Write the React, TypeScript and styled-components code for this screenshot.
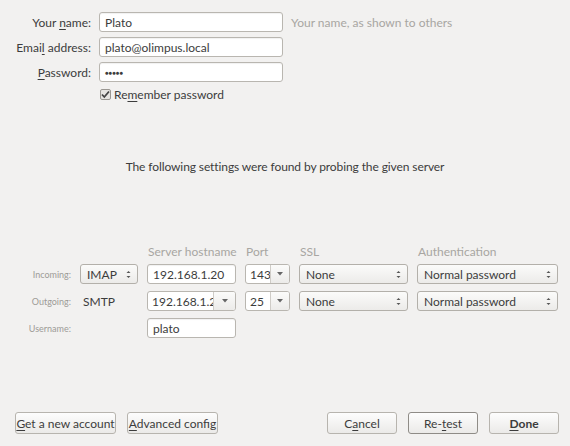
import React from "react";
import styled, { createGlobalStyle } from "styled-components";

const Global = createGlobalStyle`
  html, body { margin: 0; padding: 0; }
  body {
    background: #f2f1f0;
    font-family: "Lato", "Open Sans", sans-serif;
    font-size: 12px;
    color: #3c3c3c;
  }
`;

const Page = styled.div`
  width: 570px;
  height: 446px;
  box-sizing: border-box;
  display: flex;
  flex-direction: column;
  padding-top: 12px;
`;

const TopForm = styled.div`
  display: grid;
  grid-template-columns: 91px 184px auto;
  column-gap: 8px;
  row-gap: 5px;
  align-items: center;
`;

const Label = styled.label`
  text-align: right;
  white-space: nowrap;
`;

const Mn = styled.span`
  text-decoration: underline;
  text-underline-offset: 2px;
`;

const TextInput = styled.div`
  height: 20px;
  box-sizing: border-box;
  border: 1px solid #b9b6b0;
  border-radius: 3px;
  background: #fff;
  padding: 0 5px;
  display: flex;
  align-items: center;
  white-space: nowrap;
  overflow: hidden;
  box-shadow: inset 0 1px 1px rgba(0,0,0,0.06);
`;

const Hint = styled.span`
  color: #a8a6a2;
  white-space: nowrap;
`;

const Dots = styled.span`
  font-size: 6px;
  letter-spacing: 0px;
`;

const CheckRow = styled.div`
  display: flex;
  align-items: center;
  gap: 3px;
  margin-left: 100px;
  margin-top: 5px;
`;

const Message = styled.div`
  text-align: center;
  margin-top: 57px;
  letter-spacing: -0.1px;
`;

const ServerGrid = styled.div`
  display: grid;
  grid-template-columns: 71px 58px 89px 45px 109px 141px;
  column-gap: 9px;
  row-gap: 7px;
  align-items: center;
  margin-top: 70px;
`;

const ColHead = styled.div`
  color: #a8a6a2;
  white-space: nowrap;
  padding-left: 1px;
  margin-bottom: -2px;
`;

const RowLabel = styled.div`
  text-align: right;
  font-size: 9px;
  color: #9d9b97;
`;

const Proto = styled.div`
  padding-left: 3px;
`;

const SelectBox = styled.div`
  height: 20px;
  box-sizing: border-box;
  border: 1px solid #b3b0aa;
  border-radius: 3px;
  background: linear-gradient(#fbfbfa, #ecebe9);
  display: flex;
  align-items: center;
  justify-content: space-between;
  padding: 0 6px 0 6px;
  white-space: nowrap;
`;

const Combo = styled.div`
  height: 20px;
  box-sizing: border-box;
  border: 1px solid #b9b6b0;
  border-radius: 3px;
  background: #fff;
  display: flex;
  align-items: stretch;
  overflow: hidden;
`;

const ComboText = styled.div`
  flex: 1;
  min-width: 0;
  display: flex;
  align-items: center;
  padding-left: 4px;
  overflow: hidden;
  white-space: nowrap;
`;

const ComboBtn = styled.div<{ $w: number }>`
  width: ${(p) => p.$w}px;
  flex: none;
  border-left: 1px solid #cfccc7;
  background: linear-gradient(#fbfbfa, #ecebe9);
  display: flex;
  align-items: center;
  justify-content: center;
`;

const Updown = () => (
  <svg width="5" height="9" viewBox="0 0 5 9">
    <path d="M0.5 3 L2.5 1 L4.5 3 Z" fill="#555" />
    <path d="M0.5 6 L2.5 8 L4.5 6 Z" fill="#555" />
  </svg>
);

const Down = () => (
  <svg width="6" height="4" viewBox="0 0 6 4">
    <path d="M0 0 L6 0 L3 3.5 Z" fill="#666" />
  </svg>
);

const Footer = styled.div`
  margin-top: auto;
  display: flex;
  align-items: center;
  padding: 0 11px 12px 15px;
  gap: 11px;
`;

const Spacer = styled.div`
  flex: 1;
`;

const Button = styled.div<{ $w: number; $focus?: boolean; $bold?: boolean }>`
  width: ${(p) => p.$w}px;
  height: 22px;
  box-sizing: border-box;
  border: 1px solid ${(p) => (p.$focus ? "#8f8c87" : "#b7b4ae")};
  border-radius: 3px;
  background: linear-gradient(#fdfdfd, #ebeae8);
  display: flex;
  align-items: center;
  justify-content: center;
  font-weight: ${(p) => (p.$bold ? 700 : 400)};
  white-space: nowrap;
`;

const CheckBox = () => (
  <svg width="11" height="11" viewBox="0 0 11 11">
    <rect x="0.5" y="0.5" width="10" height="10" rx="1.5" fill="#e6e4e1" stroke="#9a9792" />
    <path d="M2 5.5 L4.3 8 L9 2.5" fill="none" stroke="#444" strokeWidth="1.8" />
  </svg>
);

export default function App() {
  return (
    <>
      <Global />
      <Page>
        <TopForm>
          <Label>Your <Mn>n</Mn>ame:</Label>
          <TextInput>Plato</TextInput>
          <Hint>Your name, as shown to others</Hint>
          <Label>Emai<Mn>l</Mn> address:</Label>
          <TextInput>plato@olimpus.local</TextInput>
          <span />
          <Label><Mn>P</Mn>assword:</Label>
          <TextInput><Dots>●●●●●</Dots></TextInput>
          <span />
        </TopForm>
        <CheckRow>
          <CheckBox />
          <span>Re<Mn>m</Mn>ember password</span>
        </CheckRow>
        <Message>The following settings were found by probing the given server</Message>
        <ServerGrid>
          <span />
          <span />
          <ColHead>Server hostname</ColHead>
          <ColHead>Port</ColHead>
          <ColHead>SSL</ColHead>
          <ColHead>Authentication</ColHead>

          <RowLabel>Incoming:</RowLabel>
          <SelectBox>IMAP<Updown /></SelectBox>
          <TextInput>192.168.1.20</TextInput>
          <Combo><ComboText>143</ComboText><ComboBtn $w={18}><Down /></ComboBtn></Combo>
          <SelectBox>None<Updown /></SelectBox>
          <SelectBox>Normal password<Updown /></SelectBox>

          <RowLabel>Outgoing:</RowLabel>
          <Proto>SMTP</Proto>
          <Combo><ComboText>192.168.1.20</ComboText><ComboBtn $w={21}><Down /></ComboBtn></Combo>
          <Combo><ComboText>25</ComboText><ComboBtn $w={18}><Down /></ComboBtn></Combo>
          <SelectBox>None<Updown /></SelectBox>
          <SelectBox>Normal password<Updown /></SelectBox>

          <RowLabel>Username:</RowLabel>
          <span />
          <TextInput>plato</TextInput>
        </ServerGrid>
        <Footer>
          <Button $w={101}><span><Mn>G</Mn>et a new account</span></Button>
          <Button $w={91}><span><Mn>A</Mn>dvanced config</span></Button>
          <Spacer />
          <Button $w={70}><span>C<Mn>a</Mn>ncel</span></Button>
          <Button $w={70} $focus><span>Re-<Mn>t</Mn>est</span></Button>
          <Button $w={70} $bold><span><Mn>D</Mn>one</span></Button>
        </Footer>
      </Page>
    </>
  );
}
